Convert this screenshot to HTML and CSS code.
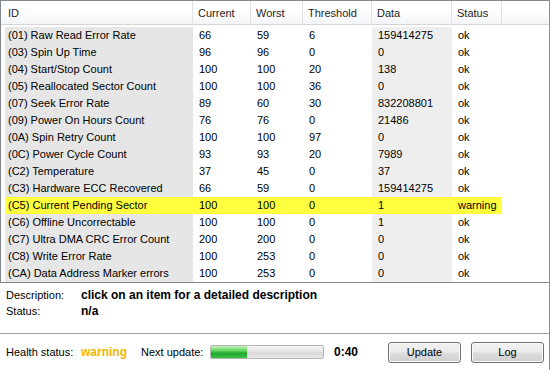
FILE: index.html
```html
<!DOCTYPE html>
<html lang="en">
<head>
  <meta charset="UTF-8" />
  <title>S.M.A.R.T. Status</title>
  <link rel="stylesheet" href="styles.css">
</head>
<body>
  <div class="window">
    <div class="listview">
      <table class="smart">
        <colgroup>
          <col class="c-id"><col class="c-cur"><col class="c-worst"><col class="c-thr"><col class="c-data"><col class="c-status"><col class="c-fill">
        </colgroup>
        <thead>
          <tr><th class="id">ID</th><th>Current</th><th>Worst</th><th>Threshold</th><th>Data</th><th>Status</th><th class="fill"></th></tr>
        </thead>
        <tbody id="rows"></tbody>
      </table>
    </div>

    <div class="details">
      <div class="detail-row"><span class="label">Description:</span><span class="value">click on an item for a detailed description</span></div>
      <div class="detail-row"><span class="label">Status:</span><span class="value">n/a</span></div>
    </div>

    <div class="footer">
      <span class="label">Health status:</span>
      <span class="health">warning</span>
      <span class="next-label">Next update:</span>
      <div class="progress"><div class="progress-fill" style="width: 32%"></div></div>
      <span class="countdown">0:40</span>
      <div class="buttons">
        <button class="btn">Update</button>
        <button class="btn">Log</button>
      </div>
    </div>
  </div>

  <script>
    const attrs = [
      ['(01) Raw Read Error Rate', 66, 59, 6, 159414275, 'ok'],
      ['(03) Spin Up Time', 96, 96, 0, 0, 'ok'],
      ['(04) Start/Stop Count', 100, 100, 20, 138, 'ok'],
      ['(05) Reallocated Sector Count', 100, 100, 36, 0, 'ok'],
      ['(07) Seek Error Rate', 89, 60, 30, 832208801, 'ok'],
      ['(09) Power On Hours Count', 76, 76, 0, 21486, 'ok'],
      ['(0A) Spin Retry Count', 100, 100, 97, 0, 'ok'],
      ['(0C) Power Cycle Count', 93, 93, 20, 7989, 'ok'],
      ['(C2) Temperature', 37, 45, 0, 37, 'ok'],
      ['(C3) Hardware ECC Recovered', 66, 59, 0, 159414275, 'ok'],
      ['(C5) Current Pending Sector', 100, 100, 0, 1, 'warning'],
      ['(C6) Offline Uncorrectable', 100, 100, 0, 1, 'ok'],
      ['(C7) Ultra DMA CRC Error Count', 200, 200, 0, 0, 'ok'],
      ['(C8) Write Error Rate', 100, 253, 0, 0, 'ok'],
      ['(CA) Data Address Marker errors', 100, 253, 0, 0, 'ok']
    ];

    const tbody = document.getElementById('rows');
    attrs.forEach(a => {
      const tr = document.createElement('tr');
      if (a[5] !== 'ok') tr.className = 'warn';
      tr.innerHTML =
        '<td class="id">' + a[0] + '</td>' +
        '<td>' + a[1] + '</td>' +
        '<td>' + a[2] + '</td>' +
        '<td>' + a[3] + '</td>' +
        '<td class="data">' + a[4] + '</td>' +
        '<td>' + a[5] + '</td>' +
        '<td class="fill"></td>';
      tbody.appendChild(tr);
    });
  </script>
</body>
</html>
```

FILE: styles.css
```css
body {
  margin: 0;
  padding: 0;
  background: #fff;
  font-family: "Liberation Sans", Arial, sans-serif;
  font-size: 11px;
  color: #000;
}

.window {
  width: 550px;
  height: 370px;
  box-sizing: border-box;
  border-right: 1px solid #8e8f8f;
  display: flex;
  flex-direction: column;
}

.listview {
  height: 283px;
  box-sizing: border-box;
  border: 1px solid #828790;
  border-right: none;
  overflow: hidden;
}

.smart {
  table-layout: fixed;
  border-collapse: separate;
  border-spacing: 0;
  width: 548px;
}

.c-id { width: 192px; }
.c-cur { width: 58px; }
.c-worst { width: 52px; }
.c-thr { width: 69px; }
.c-data { width: 80px; }
.c-status { width: 50px; }
.c-fill { width: 47px; }

.smart th {
  height: 23px;
  padding: 0 0 0 5px;
  text-align: left;
  font-weight: normal;
  color: #1e1e1e;
  background: linear-gradient(#ffffff 45%, #f3f4f6);
  border-right: 1px solid #e2e3e5;
  border-bottom: 1px solid #d5d5d5;
  white-space: nowrap;
}

.smart th.id {
  padding-left: 7px;
}

.smart th.fill {
  border-right: none;
}

.smart tbody tr:first-child td {
  border-top: 2px solid #fff;
}

.smart td {
  height: 17px;
  line-height: 17px;
  padding: 0 0 0 6px;
  white-space: nowrap;
  overflow: hidden;
}

.smart td.id {
  border-left: 4px solid #fff;
  padding-left: 3px;
  background: #e6e6e6;
}

.smart td.data {
  background: #eeeeee;
}

.smart tr.warn td {
  background: #ffff3e;
}

.smart tr.warn td.fill {
  background: #fff;
}

.details {
  height: 50px;
  box-sizing: border-box;
  padding: 4px 0 0 6px;
}

.detail-row {
  display: flex;
  line-height: 16px;
}

.label {
  width: 75px;
  flex-shrink: 0;
}

.value {
  font-weight: bold;
  font-size: 12px;
}

.footer {
  flex: 1;
  border-top: 1px solid #a0a0a0;
  display: flex;
  align-items: center;
  padding: 0 5px 0 6px;
}

.health {
  width: 60px;
  font-weight: bold;
  font-size: 12px;
  color: #f2b600;
}

.next-label {
  width: 69px;
}

.progress {
  width: 112px;
  height: 12px;
  border: 1px solid #b3b3b3;
  border-radius: 2px;
  background: linear-gradient(#f4f4f4, #e3e3e3 50%, #d9d9d9 55%, #e8e8e8);
  overflow: hidden;
}

.progress-fill {
  height: 100%;
  background: linear-gradient(#c6f2c0, #5fd45a 40%, #1fa82d 60%, #3cc044);
}

.countdown {
  margin-left: 10px;
  font-weight: bold;
  font-size: 12px;
}

.buttons {
  margin-left: auto;
  display: flex;
  gap: 10px;
}

.btn {
  width: 73px;
  height: 21px;
  padding: 0;
  font-family: "Liberation Sans", Arial, sans-serif;
  font-size: 11px;
  color: #000;
  border: 1px solid #707070;
  border-radius: 3px;
  background: linear-gradient(#f2f2f2, #ebebeb 48%, #dddddd 52%, #cfcfcf);
  box-shadow: inset 0 0 0 1px #fbfbfb;
}
```
